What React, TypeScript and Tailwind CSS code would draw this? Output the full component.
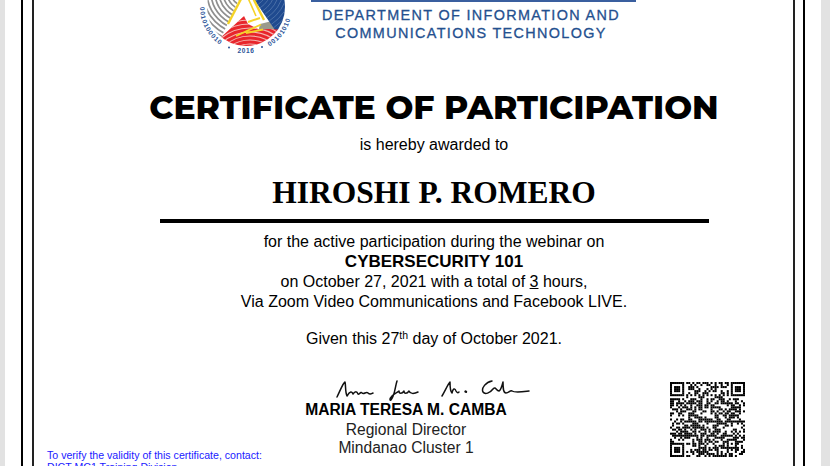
const N = 37;
function qrCell(x: number, y: number): boolean {
  const finder = (cx: number, cy: number) => {
    if (x < cx || x > cx + 6 || y < cy || y > cy + 6) return null;
    const dx = Math.max(Math.abs(x - cx - 3), Math.abs(y - cy - 3));
    return dx !== 2;
  };
  const f = finder(0, 0) ?? finder(N - 7, 0) ?? finder(0, N - 7);
  if (f !== null) return f;
  if ((x === 7 && (y < 8 || y >= N - 8)) || (y === 7 && (x < 8 || x >= N - 8)) || (x === N - 8 && y < 8)) return false;
  if (x >= 28 && x <= 32 && y >= 28 && y <= 32) {
    return Math.max(Math.abs(x - 30), Math.abs(y - 30)) !== 1;
  }
  if (y === 6) return x % 2 === 0;
  if (x === 6) return y % 2 === 0;
  const h = Math.sin(x * 12.9898 + y * 78.233 + 3.1) * 43758.5453;
  return h - Math.floor(h) > 0.47;
}

function QrCode() {
  const rects = [];
  for (let y = 0; y < N; y++) {
    for (let x = 0; x < N; x++) {
      if (qrCell(x, y)) rects.push(<rect key={x + "-" + y} x={x} y={y} width="1" height="1" />);
    }
  }
  return (
    <svg width="75" height="75" viewBox="0 0 37 37" fill="#000" className="block">
      {rects}
    </svg>
  );
}

function Logo() {
  const rings = [6, 10, 14, 18, 22, 26, 30, 34, 38, 42, 46, 50, 54, 58];
  const font = "'Liberation Sans', sans-serif";
  return (
    <svg width="96" height="58" viewBox="0 0 96 58" className="block">
      <defs>
        <clipPath id="disc"><circle cx="48" cy="7" r="39" /></clipPath>
        <clipPath id="left"><path d="M0 -5 L43 -5 L30 23 L22 40 L0 48 Z" /></clipPath>
        <clipPath id="blue"><path d="M53 -5 L96 -5 L96 40 L77 30 Z" /></clipPath>
        <clipPath id="red"><path d="M20 40 L46 16 L50 24 L62 30 L70 29 L90 30 L90 58 L10 58 Z" /></clipPath>
        <path id="ring" d="M 48 -39 A 46 46 0 1 0 48.01 -39" />
      </defs>
      <g clipPath="url(#disc)">
        <circle cx="48" cy="7" r="39" fill="#fff" />
        <g clipPath="url(#left)">
          {rings.map((r) => (
            <circle key={r} cx="47" cy="-8" r={r} fill="none" stroke="#8f8f8f" strokeWidth="1.7" />
          ))}
        </g>
        <path d="M44 -5 L53 -5 L70 24 L62 28 L48 22 Z" fill="#fff" />
        <path d="M62 24 L78 20 L78 33 L60 33 Z" fill="#9a9a8c" />
        <g clipPath="url(#blue)">
          <rect x="50" y="-5" width="46" height="50" fill="#1f4a8f" />
          {rings.map((r) => (
            <circle key={r} cx="48" cy="-14" r={r} fill="none" stroke="#5679ad" strokeWidth="0.8" />
          ))}
        </g>
        <g clipPath="url(#red)">
          <rect x="10" y="14" width="80" height="44" fill="#e8262c" />
          {rings.map((r) => (
            <circle key={r} cx="52" cy="74" r={r} fill="none" stroke="#f3b5b0" strokeWidth="1.1" />
          ))}
        </g>
        <path d="M30 24 L43.5 -2" fill="none" stroke="#f5d327" strokeWidth="2.4" />
        <path d="M55 -2 L66 20" fill="none" stroke="#f5d327" strokeWidth="2.4" />
        <path d="M50 -2 L58 16" fill="none" stroke="#f5d327" strokeWidth="1.6" />
        <path d="M38 36 L63 24.5 M48 33 L65 29.5 M50 22 L62 18" fill="none" stroke="#f5d327" strokeWidth="1.9" />
      </g>
      <text fontFamily={font} fontSize="6.5" fontWeight="700" fill="#2a5398" letterSpacing="0.9">
        <textPath href="#ring" startOffset="25%">0010100010</textPath>
      </text>
      <text x="48" y="53" textAnchor="middle" fontFamily={font} fontSize="6.5" fontWeight="700" fill="#2a5398" letterSpacing="0.6">2016</text>
      <circle cx="31" cy="47.5" r="1" fill="#2a5398" />
      <circle cx="64" cy="47" r="1" fill="#2a5398" />
      <text fontFamily={font} fontSize="6.5" fontWeight="700" fill="#2a5398" letterSpacing="0.9">
        <textPath href="#ring" startOffset="58.5%">00101010</textPath>
      </text>
    </svg>
  );
}

function Signature() {
  return (
    <svg width="200" height="26" viewBox="0 0 200 26" className="block" fill="none" stroke="#111" strokeWidth="1.5" strokeLinecap="round" strokeLinejoin="round">
      <path d="M2 18 C5 12 8 4 10 3 C11 7 10 13 12 17 C15 12 17 12 18 15 C20 12 22 12 23 15 C24 16 26 12 27 14 C29 16 31 12 33 14 C35 16 36 15 38 14" />
      <path d="M62 2 C60 8 60 16 56 21 C55 22 54 20 57 17 C60 14 62 14 64 12 C64 15 67 15 69 12 C69 15 72 15 74 12 C75 15 79 15 83 13" />
      <path d="M107 17 C110 12 113 5 115 3 C115 8 115 12 117 14 C118 9 120 9 121 12 C122 14 123 14 124 13" />
      <path d="M130.5 12.5 L131 12.8" strokeWidth="2.4" />
      <path d="M157 2 C151 3 146 9 148 13 C150 16 155 14 158 10 C161 7 161 12 164 12 C166 11 167 7 168 3 C168 8 168 14 171 14 C174 14 175 11 177 12 C180 14 186 13 194 12" />
    </svg>
  );
}

export default function App() {
  return (
    <div className="h-[466px] w-[830px] overflow-hidden bg-[#e2e2e2] pl-[5px] pr-[9px] font-['Liberation_Sans',sans-serif] text-black">
      <div className="h-full bg-white pl-[16px] pr-[16px]">
        <div className="h-full border-x-2 border-black pl-[9px] pr-[8px]">
          <div className="flex h-full flex-col border-x-2 border-[#222] bg-white">
            <div className="flex h-[58px] w-full shrink-0 items-start pl-[164px]">
              <Logo />
              <div className="ml-[17px] flex w-[325px] flex-col items-center border-t-2 border-[#3a5f9f] pt-[4px] pr-[5px] text-[14.4px] leading-[18px] font-medium tracking-[1.35px] text-[#24508f] [-webkit-text-stroke:0.3px_#24508f]">
                <div>DEPARTMENT OF INFORMATION AND</div>
                <div>COMMUNICATIONS TECHNOLOGY</div>
              </div>
            </div>
            <div className="flex flex-col items-center pl-[41px]">
              <h1 className="mt-[29px] font-['Montserrat','Open_Sans',sans-serif] text-[33px] leading-[40px] font-extrabold">CERTIFICATE OF PARTICIPATION</h1>
              <div className="mt-[9px] text-[16px] leading-[18px]">is hereby awarded to</div>
              <div className="mt-[21px] font-['Liberation_Serif',serif] text-[31.5px] leading-[36px] font-bold">HIROSHI P. ROMERO</div>
              <div className="mt-[8px] h-[4px] w-[549px] bg-black"></div>
              <div className="mt-[9px] text-center text-[16px] leading-[20px]">
                <div>for the active participation during the webinar on</div>
                <div className="text-[17px] font-bold">CYBERSECURITY 101</div>
                <div>on October 27, 2021 with a total of <u>3</u> hours,</div>
                <div>Via Zoom Video Communications and Facebook LIVE.</div>
                <div className="mt-[17px]">Given this 27<sup className="text-[10.5px]">th</sup> day of October 2021.</div>
              </div>
            </div>
            <div className="mt-[4px] flex w-full items-start">
              <div className="ml-[13px] mt-[96px] w-[228px] shrink-0 text-[10.6px] leading-[12px] text-[#1a1aff]">
                <div>To verify the validity of this certificate, contact:</div>
                <div>DICT MC1 Training Division</div>
              </div>
              <div className="ml-[20px] mt-[26px] flex w-[222px] shrink-0 flex-col items-center text-[15.6px] leading-[18px] text-[#222]">
                <div className="-mb-[5px] ml-[40px] self-start"><Signature /></div>
                <div className="font-bold leading-[19px] text-black">MARIA TERESA M. CAMBA</div>
                <div className="mt-[2px]">Regional Director</div>
                <div>Mindanao Cluster 1</div>
              </div>
              <div className="ml-[153px] mt-[29px] shrink-0"><QrCode /></div>
            </div>
          </div>
        </div>
      </div>
    </div>
  );
}
